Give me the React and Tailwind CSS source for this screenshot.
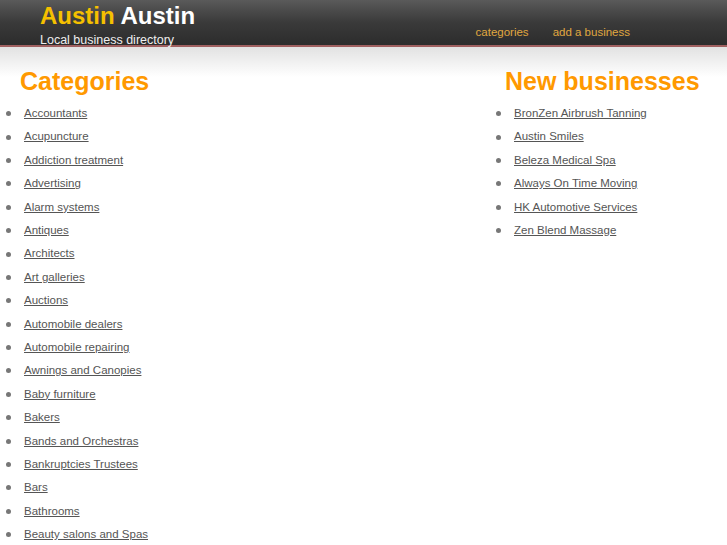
const categories = [
  "Accountants", "Acupuncture", "Addiction treatment", "Advertising", "Alarm systems",
  "Antiques", "Architects", "Art galleries", "Auctions", "Automobile dealers",
  "Automobile repairing", "Awnings and Canopies", "Baby furniture", "Bakers",
  "Bands and Orchestras", "Bankruptcies Trustees", "Bars", "Bathrooms", "Beauty salons and Spas",
];

const newBusinesses = [
  "BronZen Airbrush Tanning", "Austin Smiles", "Beleza Medical Spa",
  "Always On Time Moving", "HK Automotive Services", "Zen Blend Massage",
];

const LinkList = ({ items }) => (
  <ul className="mt-[4px]">
    {items.map((item) => (
      <li key={item} className="flex items-center h-[23.4px]">
        <span className="w-[5px] h-[5px] rounded-full bg-[#777] ml-[6px] mr-[13px]" />
        <a href="#" className="text-[11.5px] text-[#555] underline">{item}</a>
      </li>
    ))}
  </ul>
);

export default function App() {
  return (
    <div className="w-[727px] h-[545px] overflow-hidden bg-white font-[family-name:Liberation_Sans]">
      {/* Header */}
      <div className="h-[47px] bg-gradient-to-b from-[#5a5a5a] via-[#3a3a3a] to-[#2c2c2c] flex justify-between border-b-2 border-[#a06060]">
        <div className="pl-[40px] pt-[2px]">
          <div className="font-bold text-[24px] leading-[28px]">
            <span className="text-[#f5c000]">Austin</span>{" "}
            <span className="text-white">Austin</span>
          </div>
          <div className="text-[12.5px] text-[#eee] leading-[18px] mt-[1px]">Local business directory</div>
        </div>
        <div className="flex gap-[24px] pr-[97px] pt-[24px] text-[11.5px] text-[#e0a840]">
          <span>categories</span>
          <span>add a business</span>
        </div>
      </div>
      <div className="bg-gradient-to-b from-[#e2e2e2] to-white h-[30px]" />

      <div className="flex justify-between -mt-[13px]">
        <div>
          <h1 className="pl-[20px] font-bold text-[25px] leading-[34px] text-[#ff9900]">Categories</h1>
          <LinkList items={categories} />
        </div>
        <div className="w-[237px]">
          <h1 className="pl-[15px] font-bold text-[25px] leading-[34px] text-[#ff9900]">New businesses</h1>
          <LinkList items={newBusinesses} />
        </div>
      </div>
    </div>
  );
}
